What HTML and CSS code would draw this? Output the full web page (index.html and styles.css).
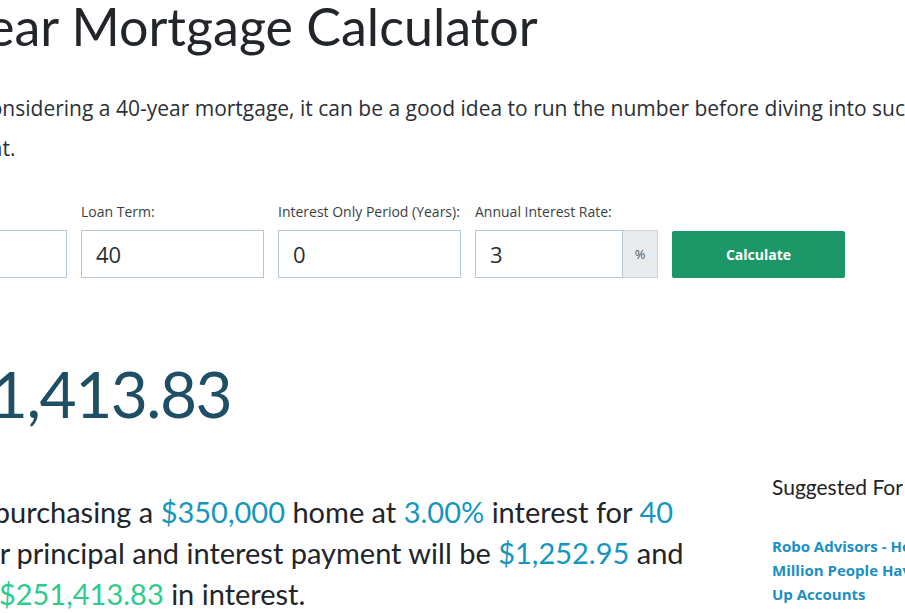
FILE: index.html
```html
<!DOCTYPE html>
<html>
<head>
<meta charset="utf-8">
<link rel="stylesheet" href="styles.css">
</head>
<body>
<div class="page">
  <h1 class="title">40-Year Mortgage Calculator</h1>
  <p class="intro"><span class="lead">If you're</span> considering a 40-year mortgage, it can be a good idea to run the number before diving into such a commitment.</p>
  <form class="calc">
    <div class="field">
      <label>Loan Amount:</label>
      <div class="input">350000</div>
    </div>
    <div class="field">
      <label>Loan Term:</label>
      <div class="input">40</div>
    </div>
    <div class="field">
      <label>Interest Only Period (Years):</label>
      <div class="input">0</div>
    </div>
    <div class="field">
      <label>Annual Interest Rate:</label>
      <div class="group">
        <div class="input grow">3</div>
        <div class="addon">%</div>
      </div>
    </div>
    <div class="field">
      <label class="blank">&nbsp;</label>
      <button type="button" class="btn">Calculate</button>
    </div>
  </form>
  <div class="result">$251,413.83</div>
  <div class="bottom">
    <p class="summary">If you're purchasing a <span class="hl">$350,000</span> home at <span class="hl">3.00%</span> interest for <span class="hl">40</span> <span class="tight">years, your</span> principal and interest payment will be <span class="hl">$1,252.95</span> and <span class="tight">you'll pay</span> <span class="hl-green">$251,413.83</span> in interest.</p>
    <aside class="side">
      <h3 class="side-title">Suggested For You</h3>
      <a class="side-link" href="#">Robo Advisors - Here's Why 2 Million People Have Signed Up Accounts</a>
    </aside>
  </div>
</div>
</body>
</html>
```
FILE: styles.css
```css
html, body {
  margin: 0;
  padding: 0;
  background: #fff;
  overflow: hidden;
}
body {
  width: 905px;
  height: 613px;
}
.page {
  margin-left: -116px;
  width: 1100px;
  color: #212529;
  font-family: "Open Sans", sans-serif;
}
.title {
  font-family: Lato, sans-serif;
  font-weight: 400;
  font-size: 52px;
  line-height: 53px;
  margin: 0;
  color: #22262b;
}
.intro {
  font-size: 21px;
  line-height: 40px;
  margin: 35px 0 0 0;
  width: 1060px;
  color: #2b3036;
}
.lead {
  letter-spacing: 1.2px;
}
.tight {
  letter-spacing: -1.2px;
}
.calc {
  display: flex;
  gap: 14px;
  margin-top: 35px;
}
.field {
  width: 183px;
  display: flex;
  flex-direction: column;
}
label {
  font-size: 14px;
  line-height: 18px;
  color: #3a3f44;
  margin-bottom: 9px;
}
.input {
  box-sizing: border-box;
  height: 48px;
  border: 1px solid #b9c7d2;
  padding: 0 14px;
  font-size: 22px;
  line-height: 46px;
  color: #2b2f33;
  background: #fff;
}
.group {
  display: flex;
}
.grow {
  flex: 1;
}
.addon {
  box-sizing: border-box;
  width: 35px;
  height: 48px;
  border: 1px solid #ced4da;
  border-left: none;
  background: #e9ecef;
  font-size: 13px;
  line-height: 46px;
  text-align: center;
  color: #555;
}
.btn {
  height: 47px;
  width: 173px;
  margin-top: 1px;
  background: #1c9767;
  border: none;
  border-radius: 2px;
  color: #fff;
  font-family: "Open Sans", sans-serif;
  font-weight: 700;
  font-size: 14px;
}
.result {
  font-family: Lato, sans-serif;
  font-size: 64px;
  line-height: 70px;
  letter-spacing: -1.5px;
  margin-top: 81px;
  color: #1e4f64;
}
.bottom {
  display: flex;
  margin-top: 51px;
}
.summary {
  width: 836px;
  flex: none;
  margin: 0;
  font-family: Lato, sans-serif;
  font-size: 29px;
  line-height: 41px;
  color: #212529;
  margin-top: 11px;
}
.hl {
  color: #1597bd;
}
.hl-green {
  color: #2ecc8c;
}
.side {
  margin-left: 52px;
  width: 225px;
  flex: none;
}
.side-title {
  font-family: Lato, sans-serif;
  font-weight: 400;
  font-size: 21px;
  line-height: 24px;
  margin: -5px 0 35px 0;
  color: #222;
  white-space: nowrap;
}
.side-link {
  display: block;
  font-weight: 700;
  font-size: 15px;
  line-height: 24px;
  color: #1b8fc1;
  text-decoration: none;
}
```
